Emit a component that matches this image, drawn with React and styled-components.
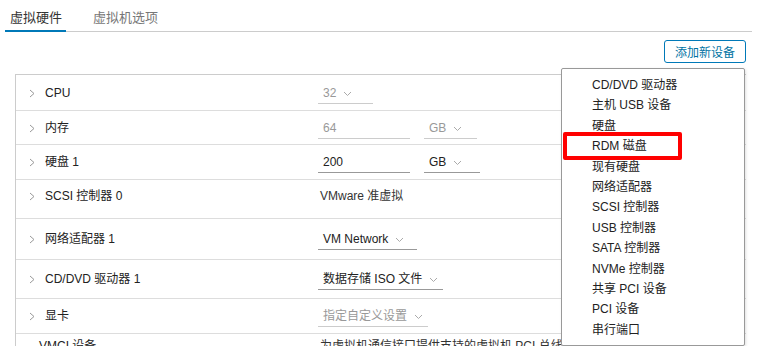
import React from "react";
import styled, { createGlobalStyle } from "styled-components";

const GlobalStyle = createGlobalStyle`
  html, body {
    margin: 0;
    padding: 0;
    background: #fff;
    height: 346px;
    overflow: hidden;
  }
  body {
    font-family: "Liberation Sans", "Noto Sans CJK SC", sans-serif;
    color: #333;
  }
`;

const rows = [
  { label: "CPU", h: 35, top: 18, fields: [{ text: "32", w: 55, select: true, muted: true }] },
  {
    label: "内存",
    h: 34,
    top: 17,
    fields: [
      { text: "64", w: 92, muted: true },
      { text: "GB", w: 53, select: true, muted: true },
    ],
  },
  {
    label: "硬盘 1",
    h: 35,
    top: 17,
    fields: [
      { text: "200", w: 92 },
      { text: "GB", w: 56, select: true },
    ],
  },
  { label: "SCSI 控制器 0", h: 39, top: 16, plain: "VMware 准虚拟" },
  { label: "网络适配器 1", h: 41, top: 20, fields: [{ text: "VM Network", w: 99, select: true }] },
  { label: "CD/DVD 驱动器 1", h: 39, top: 19, fields: [{ text: "数据存储 ISO 文件", w: 125, select: true }] },
  { label: "显卡", h: 35, top: 17, fields: [{ text: "指定自定义设置", w: 110, select: true, muted: true }] },
  { label: "VMCI 设备", h: 35, top: 12, noArrow: true, plain: "为虚拟机通信接口提供支持的虚拟机 PCI 总线" },
];

const menuItems = [
  "CD/DVD 驱动器",
  "主机 USB 设备",
  "硬盘",
  "RDM 磁盘",
  "现有硬盘",
  "网络适配器",
  "SCSI 控制器",
  "USB 控制器",
  "SATA 控制器",
  "NVMe 控制器",
  "共享 PCI 设备",
  "PCI 设备",
  "串行端口",
];

const Chevron = () => (
  <svg width="6" height="9" viewBox="0 0 6 9">
    <polyline points="1,1 5,4.5 1,8" fill="none" stroke="#999" strokeWidth="1" />
  </svg>
);

const Caret = () => (
  <svg width="9" height="6" viewBox="0 0 9 6">
    <polyline points="1,1 4.5,4.5 8,1" fill="none" stroke="#aaa" strokeWidth="1" />
  </svg>
);

const App = () => {
  return (
    <Page>
      <GlobalStyle />
      <Tabs>
        <Tab $active>虚拟硬件</Tab>
        <Tab>虚拟机选项</Tab>
      </Tabs>
      <Toolbar>
        <AddButton>添加新设备</AddButton>
      </Toolbar>
      <Body>
        <Table>
          {rows.map((r) => (
            <Row key={r.label} $h={r.h} $top={r.top}>
              <Arrow>{!r.noArrow && <Chevron />}</Arrow>
              <Label $shift={r.noArrow}>{r.label}</Label>
              <Value>
                {r.plain && <Plain>{r.plain}</Plain>}
                {r.fields &&
                  r.fields.map((f) => (
                    <Field key={f.text} style={{ width: f.w }} $muted={f.muted}>
                      <span>{f.text}</span>
                      {f.select && <Caret />}
                    </Field>
                  ))}
              </Value>
            </Row>
          ))}
        </Table>
        <Menu>
          {menuItems.map((m) => (
            <MenuItem key={m} $marked={m === "RDM 磁盘"}>
              {m}
            </MenuItem>
          ))}
        </Menu>
      </Body>
    </Page>
  );
};

const Page = styled.div`
  width: 768px;
  height: 346px;
  overflow: hidden;
`;

const Tabs = styled.div`
  display: flex;
  align-items: flex-end;
  gap: 22px;
  margin: 0 16px 0 5px;
  height: 31px;
  border-bottom: 1px solid #ccc;
`;

const Tab = styled.div`
  box-sizing: border-box;
  height: 32px;
  margin-bottom: -1px;
  padding: 7px 4px 0 5px;
  font-size: 13px;
  color: ${(p) => (p.$active ? "#333" : "#777")};
  border-bottom: 2px solid ${(p) => (p.$active ? "#0079b8" : "transparent")};
`;

const Toolbar = styled.div`
  display: flex;
  justify-content: flex-end;
  padding: 8px 22px 0 0;
`;

const AddButton = styled.button`
  box-sizing: border-box;
  height: 23px;
  padding: 0 10px;
  font-family: inherit;
  font-size: 12px;
  color: #0072a3;
  background: #fff;
  border: 1px solid #0079b8;
  border-radius: 3px;
`;

const Body = styled.div`
  position: relative;
  margin: 11px 22px 0 15px;
`;

const Table = styled.div`
  border: 1px solid #ccc;
  border-right: none;
`;

const Row = styled.div`
  box-sizing: border-box;
  display: grid;
  grid-template-columns: 29px 273px 1fr;
  align-items: start;
  height: ${(p) => p.$h}px;
  padding-top: ${(p) => p.$top - 10}px;
  border-top: 1px solid #ddd;
  &:first-child {
    border-top: none;
  }
  font-size: 12px;
  line-height: 20px;
`;

const Arrow = styled.div`
  display: flex;
  align-items: center;
  height: 20px;
  padding-left: 13px;
`;

const Label = styled.div`
  color: #222;
  margin-left: ${(p) => (p.$shift ? "-6px" : "0")};
`;

const Value = styled.div`
  display: flex;
  gap: 14px;
`;

const Plain = styled.div`
  color: #333;
  padding-left: 2px;
  white-space: nowrap;
`;

const Field = styled.div`
  box-sizing: border-box;
  display: flex;
  align-items: center;
  gap: 7px;
  height: 21px;
  padding: 0 0 1px 5px;
  color: ${(p) => (p.$muted ? "#999" : "#222")};
  border-bottom: 1px solid ${(p) => (p.$muted ? "#ccc" : "#999")};
  svg {
    margin-top: 2px;
  }
`;

const Menu = styled.div`
  position: absolute;
  top: -6px;
  left: 546px;
  width: 184px;
  height: 278px;
  box-sizing: border-box;
  padding-top: 6px;
  background: #fff;
  border: 1px solid #999;
  border-radius: 2px;
  box-shadow: 1px 1px 3px rgba(0, 0, 0, 0.12);
`;

const MenuItem = styled.div`
  position: relative;
  height: 20.4px;
  line-height: 20.4px;
  padding-left: 30px;
  font-size: 12px;
  color: #222;
  ${(p) =>
    p.$marked &&
    `
    &::after {
      content: "";
      position: absolute;
      left: 1px;
      top: -4px;
      width: 119px;
      height: 28px;
      box-sizing: border-box;
      border: 4px solid #f00;
      border-radius: 2px;
    }
  `}
`;

export default App;
